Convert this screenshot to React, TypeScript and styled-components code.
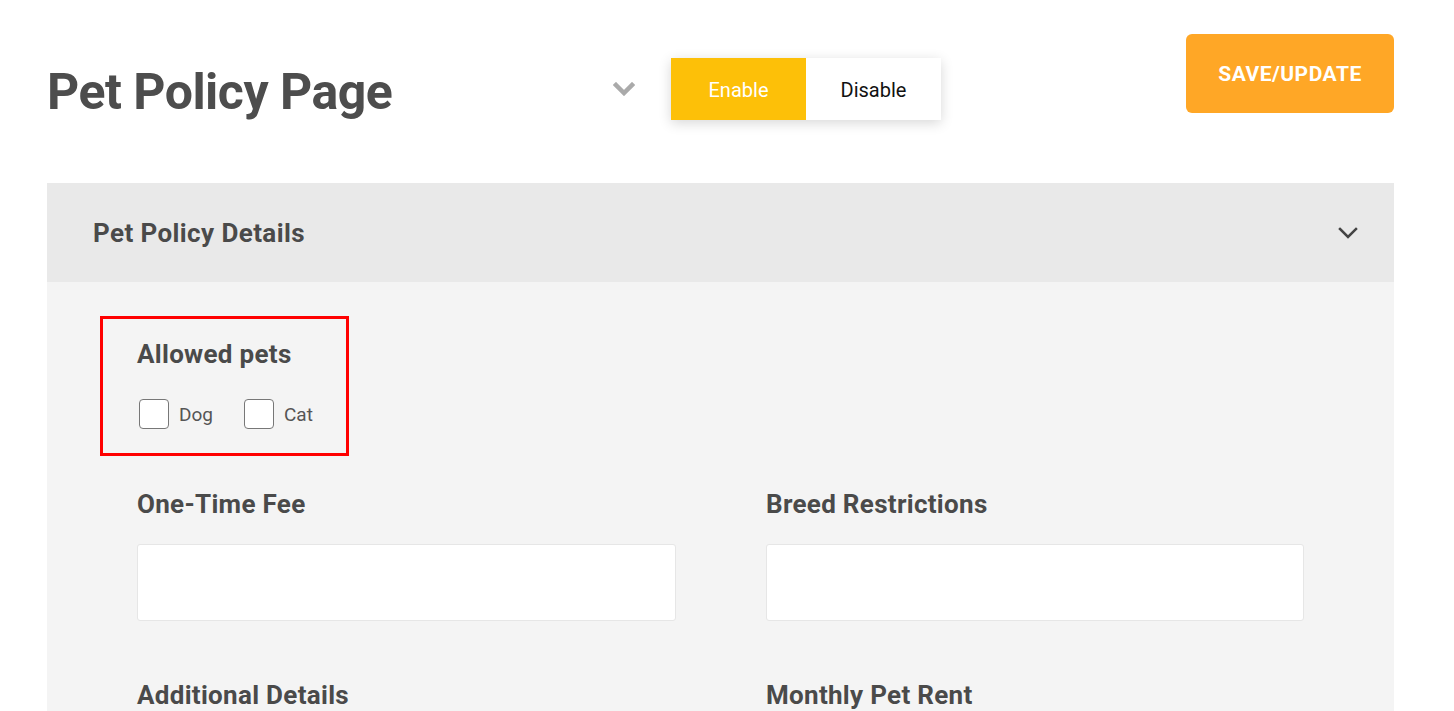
import React from "react";
import styled, { createGlobalStyle } from "styled-components";

const Global = createGlobalStyle`
  html, body { margin: 0; padding: 0; background: #ffffff; }
  body { font-family: Roboto, "Liberation Sans", sans-serif; }
  * { box-sizing: border-box; }
`;

const Page = styled.div`
  padding: 34px 60px 0 47px;
`;

const TopBar = styled.div`
  display: flex;
  align-items: flex-start;
  height: 149px;
`;

const TitleArea = styled.div`
  width: 566px;
  padding-top: 28px;
`;

const Title = styled.h1`
  margin: 0;
  font-size: 50px;
  line-height: 60px;
  font-weight: 700;
  color: #4d4d4d;
  letter-spacing: -0.5px;
`;

const ToggleGroup = styled.div`
  display: flex;
  align-items: center;
  margin-top: 24px;
  gap: 36px;
`;

const ChevronIcon = styled.svg`
  display: block;
  width: 22px;
  height: 14px;
`;

const Toggle = styled.div`
  display: flex;
  box-shadow: 0 3px 12px rgba(0, 0, 0, 0.16);
`;

const ToggleOption = styled.div<{ $active?: boolean }>`
  width: 135px;
  height: 62px;
  display: flex;
  align-items: center;
  justify-content: center;
  padding-top: 2px;
  font-size: 20px;
  background: ${(p) => (p.$active ? "#fdc008" : "#ffffff")};
  color: ${(p) => (p.$active ? "#ffffff" : "#111111")};
`;

const SaveButton = styled.button`
  margin-left: auto;
  width: 208px;
  height: 79px;
  border: none;
  border-radius: 6px;
  background: #ffa726;
  color: #ffffff;
  font-family: inherit;
  font-size: 21px;
  font-weight: 700;
  letter-spacing: 0.5px;
`;

const Panel = styled.section`
  width: 1347px;
`;

const PanelHeader = styled.div`
  height: 99px;
  background: #e9e9e9;
  display: flex;
  align-items: center;
  justify-content: space-between;
  padding: 0 35px 0 46px;
`;

const PanelTitle = styled.h2`
  margin: 0;
  font-size: 26px;
  font-weight: 700;
  color: #4a4a4a;
  letter-spacing: 0.4px;
`;

const PanelBody = styled.div`
  background: #f4f4f4;
  padding: 34px 90px 40px 90px;
  min-height: 500px;
`;

const Highlight = styled.div`
  width: 249px;
  margin: 0 0 33px -37px;
  border: 3px solid #ff0000;
  padding: 20px 0 24px 34px;
`;

const Label = styled.div`
  font-size: 26px;
  line-height: 30px;
  font-weight: 700;
  color: #4a4a4a;
  letter-spacing: 0.3px;
`;

const CheckRow = styled.div`
  display: flex;
  align-items: center;
  margin-top: 30px;
  padding-left: 2px;
  gap: 31px;
`;

const CheckItem = styled.label`
  display: flex;
  align-items: center;
  gap: 10px;
  font-size: 19px;
  color: #555555;
`;

const Box = styled.span`
  width: 30px;
  height: 30px;
  border: 1.5px solid #777777;
  border-radius: 4px;
  background: #ffffff;
`;

const Grid = styled.div`
  display: grid;
  grid-template-columns: 539px 538px;
  column-gap: 90px;
  row-gap: 59px;
`;

const Field = styled.div`
  display: flex;
  flex-direction: column;
  gap: 25px;
`;

const Input = styled.div`
  height: 77px;
  background: #ffffff;
  border: 1px solid #e6e6e6;
  border-radius: 3px;
`;

const Chevron = ({ color, width, stroke }: { color: string; width: number; stroke: number }) => (
  <ChevronIcon viewBox="0 0 22 14" style={{ width }}>
    <polyline points="3,3 11,11 19,3" fill="none" stroke={color} strokeWidth={stroke} strokeLinecap="square" />
  </ChevronIcon>
);

export default function App() {
  return (
    <>
      <Global />
      <Page>
        <TopBar>
          <TitleArea>
            <Title>Pet Policy Page</Title>
          </TitleArea>
          <ToggleGroup>
            <Chevron color="#aaaaaa" width={22} stroke={4.5} />
            <Toggle>
              <ToggleOption $active>Enable</ToggleOption>
              <ToggleOption>Disable</ToggleOption>
            </Toggle>
          </ToggleGroup>
          <SaveButton>SAVE/UPDATE</SaveButton>
        </TopBar>
        <Panel>
          <PanelHeader>
            <PanelTitle>Pet Policy Details</PanelTitle>
            <Chevron color="#444444" width={22} stroke={2.5} />
          </PanelHeader>
          <PanelBody>
            <Highlight>
              <Label>Allowed pets</Label>
              <CheckRow>
                <CheckItem>
                  <Box />
                  Dog
                </CheckItem>
                <CheckItem>
                  <Box />
                  Cat
                </CheckItem>
              </CheckRow>
            </Highlight>
            <Grid>
              <Field>
                <Label>One-Time Fee</Label>
                <Input />
              </Field>
              <Field>
                <Label>Breed Restrictions</Label>
                <Input />
              </Field>
              <Field>
                <Label>Additional Details</Label>
                <Input />
              </Field>
              <Field>
                <Label>Monthly Pet Rent</Label>
                <Input />
              </Field>
            </Grid>
          </PanelBody>
        </Panel>
      </Page>
    </>
  );
}
